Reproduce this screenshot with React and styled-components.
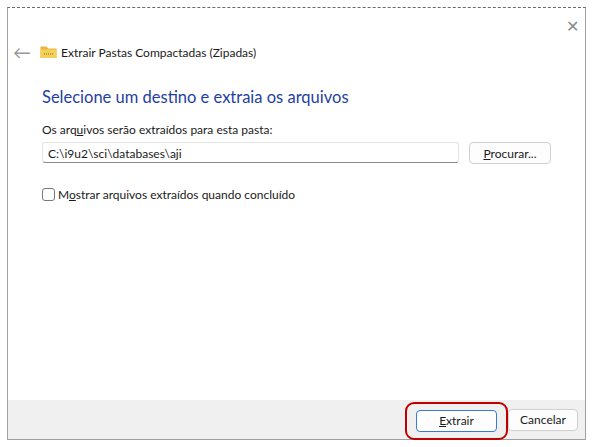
import styled, { createGlobalStyle } from "styled-components";

const Global = createGlobalStyle`
  body { margin: 0; background: #fff; font-family: "Segoe UI", Lato, "Noto Sans", sans-serif; }
`;

const Page = styled.div`
  width: 596px;
  height: 447px;
  padding: 7px 10px 9px 7px;
  box-sizing: border-box;
`;

const Window = styled.div`
  height: 100%;
  border: 1px solid #a0a0a0;
  border-top: 1px dashed #6a6a6a;
  display: flex;
  flex-direction: column;
  background: #fff;
  position: relative;
`;

const Close = styled.div`
  position: absolute;
  right: 6px;
  top: 8px;
  color: #888;
  font-size: 16px;
`;

const TitleRow = styled.div`
  display: flex;
  align-items: center;
  padding: 35px 0 0 5px;
  height: 18px;
  font-size: 12px;
  color: #1a1a1a;
`;

const Back = styled.span`
  color: #999;
  font-size: 18px;
  width: 27px;
`;

const Body = styled.div`
  flex: 1;
  padding: 26px 0 0 34px;
`;

const Heading = styled.h1`
  margin: 0 0 15px;
  font-size: 16.5px;
  font-weight: 400;
  color: #1f3f9e;
`;

const Label = styled.div`
  font-size: 12px;
  color: #1a1a1a;
  margin-bottom: 5px;
`;

const Row = styled.div`
  display: flex;
  gap: 10px;
`;

const Input = styled.div`
  width: 417px;
  height: 21px;
  box-sizing: border-box;
  border: 1px solid #e3e3e3;
  border-bottom: 1px solid #888;
  border-radius: 3px;
  font-size: 12px;
  padding: 3px 5px;
  color: #1a1a1a;
`;

const Button = styled.div`
  width: ${(p) => p.w}px;
  height: 22px;
  box-sizing: border-box;
  border: 1px solid ${(p) => (p.primary ? "#3a7ad6" : "#d0d0d0")};
  border-radius: 4px;
  background: #fdfdfd;
  font-size: 12px;
  display: flex;
  align-items: center;
  justify-content: center;
  color: #1a1a1a;
`;

const Check = styled.label`
  display: flex;
  align-items: center;
  gap: 3px;
  margin-top: 23px;
  font-size: 12px;
  color: #1a1a1a;
`;

const Box = styled.span`
  width: 11px;
  height: 11px;
  border: 1px solid #777;
  border-radius: 3px;
`;

const Footer = styled.div`
  height: 39px;
  background: #f0f0f0;
  display: flex;
  align-items: center;
  justify-content: flex-end;
  gap: 10px;
  padding-right: 7px;
`;

const Highlight = styled.div`
  padding: 6px 9px;
  border: 2.5px solid #c00000;
  border-radius: 9px;
  margin: 0 -10px 0 0;
  position: relative;
  top: 1px;
`;

export default function App() {
  return (
    <Page>
      <Global />
      <Window>
        <Close>✕</Close>
        <TitleRow>
          <Back>←</Back>
          <svg width="17" height="14" viewBox="0 0 17 14" style={{ marginRight: 4 }}>
            <path d="M0.5 1.5h6l1.5 2h8.5v9.5h-16z" fill="#e8b43a" />
            <rect x="0.5" y="4.5" width="16" height="8.5" fill="#f6cf58" />
            <path d="M4 9h1M6 9h1M8 9h1M10 9h1M12 9h1" stroke="#8a6a20" strokeWidth="1" />
          </svg>
          Extrair Pastas Compactadas (Zipadas)
        </TitleRow>
        <Body>
          <Heading>Selecione um destino e extraia os arquivos</Heading>
          <Label>Os arq<u>u</u>ivos serão extraídos para esta pasta:</Label>
          <Row>
            <Input>C:\i9u2\sci\databases\aji</Input>
            <Button w={82}><span><u>P</u>rocurar...</span></Button>
          </Row>
          <Check>
            <Box />
            <span>M<u>o</u>strar arquivos extraídos quando concluído</span>
          </Check>
        </Body>
        <Footer>
          <Highlight>
            <Button w={81} primary><span><u>E</u>xtrair</span></Button>
          </Highlight>
          <Button w={70}>Cancelar</Button>
        </Footer>
      </Window>
    </Page>
  );
}
